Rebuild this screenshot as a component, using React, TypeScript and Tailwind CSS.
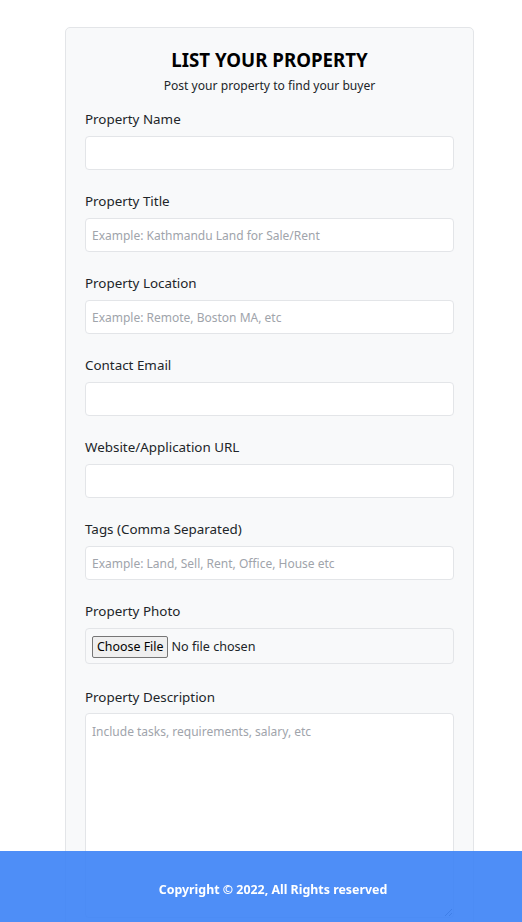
import React from "react";

const font = { fontFamily: '"Noto Sans", "Open Sans", sans-serif' };

function Field({ label, placeholder }: { label: string; placeholder?: string }) {
  return (
    <div className="mb-[21px]">
      <label className="block text-[13.4px] leading-[20px] mb-[7px] text-[#212529]">{label}</label>
      <input
        type="text"
        placeholder={placeholder}
        className="block w-full h-[34px] rounded-[4px] border border-[#e3e5e8] bg-white px-[6px] pt-[1px] text-[12px] text-[#212529] placeholder:text-[#a0a4ab] outline-none"
      />
    </div>
  );
}

export default function App() {
  return (
    <div className="min-h-screen bg-white" style={font}>
      <div className="pt-[27px] pl-[65px]">
        <div className="w-[409px] rounded-[5px] border border-[#e3e5e8] bg-[#f8f9fa] px-[19px] pt-[18px] pb-[40px]">
          <h1 className="text-center text-[18.7px] leading-[28px] font-bold text-black">LIST YOUR PROPERTY</h1>
          <p className="mt-[2px] text-center text-[12.1px] leading-[20px] text-[#212529]">Post your property to find your buyer</p>
          <div className="mt-[13px]">
            <Field label="Property Name" />
            <Field label="Property Title" placeholder="Example: Kathmandu Land for Sale/Rent" />
            <Field label="Property Location" placeholder="Example: Remote, Boston MA, etc" />
            <Field label="Contact Email" />
            <Field label="Website/Application URL" />
            <Field label="Tags (Comma Separated)" placeholder="Example: Land, Sell, Rent, Office, House etc" />
            <div className="mb-[23px]">
              <label className="block text-[13.4px] leading-[20px] mb-[7px] text-[#212529]">Property Photo</label>
              <div className="flex h-[36px] items-center rounded-[4px] border border-[#e3e5e8] bg-[#f8f9fa] px-[6px] pt-[2px]">
                <input
                  type="file"
                  className="text-[12.6px] text-[#212529] file:mr-[3px] file:h-[22px] file:rounded-[2px] file:border file:border-solid file:border-[#767676] file:bg-[#efefef] file:px-[4px] file:text-[12.4px] file:text-black"
                  style={font}
                />
              </div>
            </div>
            <div>
              <label className="block text-[13.4px] leading-[20px] mb-[6px] text-[#212529]">Property Description</label>
              <textarea
                placeholder="Include tasks, requirements, salary, etc"
                className="block w-full h-[205px] rounded-[4px] border border-[#e3e5e8] bg-white px-[6px] pt-[9px] pb-[8px] text-[12px] leading-[18px] text-[#212529] placeholder:text-[#a0a4ab] outline-none"
              />
            </div>
          </div>
        </div>
      </div>
      <footer className="fixed bottom-0 left-0 right-0 h-[71px] flex items-center justify-center pl-[24px] pt-[8px] bg-[rgba(59,130,246,0.9)]">
        <span className="text-[12.4px] font-bold text-white">Copyright © 2022, All Rights reserved</span>
      </footer>
    </div>
  );
}
